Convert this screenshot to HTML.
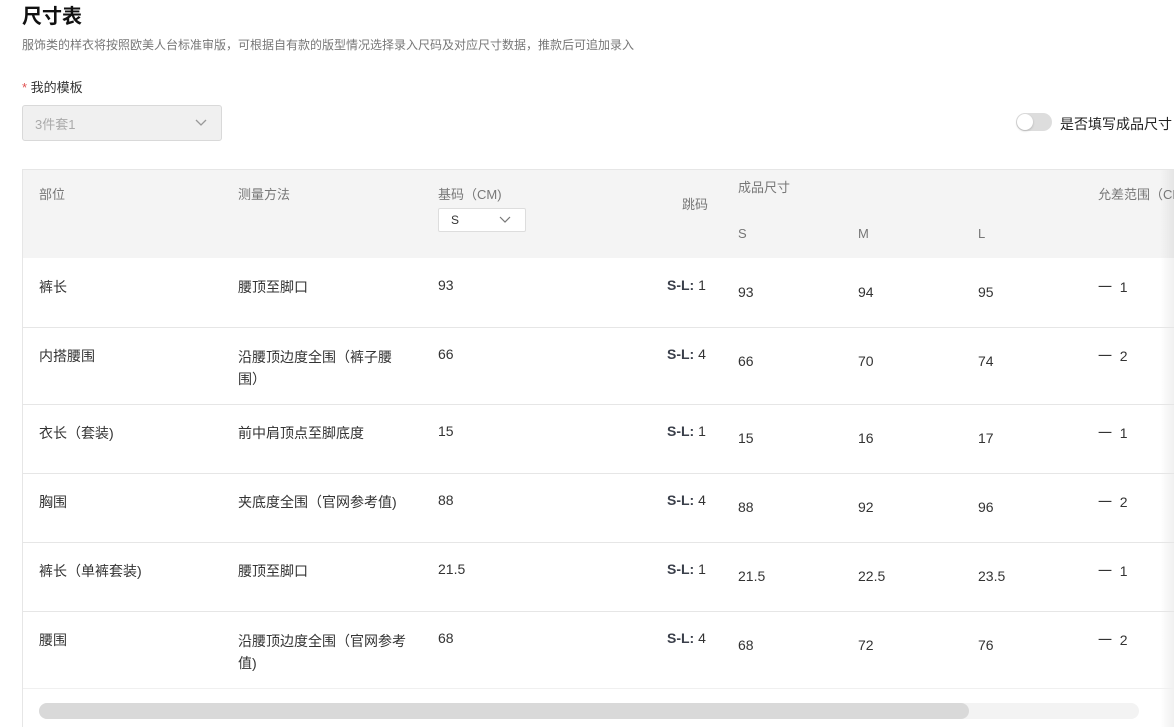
<!DOCTYPE html>
<html><head><meta charset="utf-8"><style>
*{margin:0;padding:0;box-sizing:border-box}
body{width:1174px;height:727px;overflow:hidden;background:#fff;font-family:"Liberation Sans","Noto Sans CJK SC",sans-serif;color:#333;position:relative}
.a{position:absolute;white-space:nowrap}
.h{font-size:13px;color:#777}
.c{font-size:14px;color:#333}
.b{font-weight:bold;color:#3a3f4a}
.line{position:absolute;left:23px;width:1151px;height:1px;background:#e6e6e6}
</style></head><body>
<div class="a" style="left:22px;top:0;font-size:20px;font-weight:bold;color:#111">尺寸表</div>
<div class="a" style="left:22px;top:36px;font-size:12px;color:#777">服饰类的样衣将按照欧美人台标准审版，可根据自有款的版型情况选择录入尺码及对应尺寸数据，推款后可追加录入</div>
<div class="a" style="left:22px;top:77px;font-size:13px;color:#333"><span style="color:#e05050">*</span> 我的模板</div>
<div class="a" style="left:22px;top:105px;width:200px;height:36px;background:#f0f0f0;border:1px solid #d9d9d9;border-radius:3px"></div>
<div class="a" style="left:35px;top:114px;font-size:13px;color:#aaa">3件套1</div>
<svg class="a" style="left:194px;top:118px" width="14" height="10"><path d="M2 2l5 5 5-5" fill="none" stroke="#999" stroke-width="1.3"/></svg>
<div class="a" style="left:1016px;top:113px;width:36px;height:18px;border-radius:9px;background:#ddd"></div>
<div class="a" style="left:1017px;top:114px;width:16px;height:16px;border-radius:8px;background:#fff;box-shadow:0 1px 2px rgba(0,0,0,.2)"></div>
<div class="a" style="left:1060px;top:114px;font-size:14px;color:#222">是否填写成品尺寸</div>
<div class="a" style="left:22px;top:169px;width:1152px;height:558px;border-left:1px solid #e6e6e6;border-top:1px solid #e6e6e6"></div>
<div class="a" style="left:23px;top:170px;width:1151px;height:88px;background:#f4f4f4"></div>
<div class="a" style="left:23px;top:688px;width:1151px;height:39px;background:#fff"></div>
<div class="a" style="left:1160px;top:170px;width:14px;height:557px;background:linear-gradient(90deg,rgba(0,0,0,0),rgba(0,0,0,.06))"></div>
<div class="a h" style="left:39px;top:184px">部位</div>
<div class="a h" style="left:238px;top:184px">测量方法</div>
<div class="a h" style="left:438px;top:184px">基码（CM)</div>
<div class="a" style="left:438px;top:208px;width:88px;height:24px;background:#fff;border:1px solid #ddd;border-radius:2px"></div>
<div class="a" style="left:451px;top:213px;font-size:12px;color:#333">S</div>
<svg class="a" style="left:498px;top:215px" width="14" height="10"><path d="M2 2l5 5 5-5" fill="none" stroke="#777" stroke-width="1.2"/></svg>
<div class="a h" style="left:682px;top:194px">跳码</div>
<div class="a h" style="left:738px;top:177px">成品尺寸</div>
<div class="a h" style="left:738px;top:226px">S</div>
<div class="a h" style="left:858px;top:226px">M</div>
<div class="a h" style="left:978px;top:226px">L</div>
<div class="a h" style="left:1098px;top:184px">允差范围（CM</div>
<div class="line" style="top:327px"></div>
<div class="line" style="top:404px"></div>
<div class="line" style="top:473px"></div>
<div class="line" style="top:542px"></div>
<div class="line" style="top:611px"></div>
<div class="line" style="top:688px;background:#f0f0f0"></div>

<div class="a c" style="left:39px;top:277px">裤长</div><div class="a c" style="left:238px;top:277px">腰顶至脚口</div><div class="a c" style="left:438px;top:277px">93</div><div class="a c" style="left:667px;top:277px"><span class="b">S-L:</span> 1</div><div class="a c" style="left:738px;top:284px">93</div><div class="a c" style="left:858px;top:284px">94</div><div class="a c" style="left:978px;top:284px">95</div><div class="a c" style="left:1098px;top:277px">一&nbsp;&nbsp;1</div>

<div class="a c" style="left:39px;top:346px">内搭腰围</div><div class="a c" style="left:238px;top:346px;line-height:22px">沿腰顶边度全围（裤子腰<br>围）</div><div class="a c" style="left:438px;top:346px">66</div><div class="a c" style="left:667px;top:346px"><span class="b">S-L:</span> 4</div><div class="a c" style="left:738px;top:353px">66</div><div class="a c" style="left:858px;top:353px">70</div><div class="a c" style="left:978px;top:353px">74</div><div class="a c" style="left:1098px;top:346px">一&nbsp;&nbsp;2</div>

<div class="a c" style="left:39px;top:423px">衣长（套装)</div><div class="a c" style="left:238px;top:423px">前中肩顶点至脚底度</div><div class="a c" style="left:438px;top:423px">15</div><div class="a c" style="left:667px;top:423px"><span class="b">S-L:</span> 1</div><div class="a c" style="left:738px;top:430px">15</div><div class="a c" style="left:858px;top:430px">16</div><div class="a c" style="left:978px;top:430px">17</div><div class="a c" style="left:1098px;top:423px">一&nbsp;&nbsp;1</div>

<div class="a c" style="left:39px;top:492px">胸围</div><div class="a c" style="left:238px;top:492px">夹底度全围（官网参考值)</div><div class="a c" style="left:438px;top:492px">88</div><div class="a c" style="left:667px;top:492px"><span class="b">S-L:</span> 4</div><div class="a c" style="left:738px;top:499px">88</div><div class="a c" style="left:858px;top:499px">92</div><div class="a c" style="left:978px;top:499px">96</div><div class="a c" style="left:1098px;top:492px">一&nbsp;&nbsp;2</div>

<div class="a c" style="left:39px;top:561px">裤长（单裤套装)</div><div class="a c" style="left:238px;top:561px">腰顶至脚口</div><div class="a c" style="left:438px;top:561px">21.5</div><div class="a c" style="left:667px;top:561px"><span class="b">S-L:</span> 1</div><div class="a c" style="left:738px;top:568px">21.5</div><div class="a c" style="left:858px;top:568px">22.5</div><div class="a c" style="left:978px;top:568px">23.5</div><div class="a c" style="left:1098px;top:561px">一&nbsp;&nbsp;1</div>

<div class="a c" style="left:39px;top:630px">腰围</div><div class="a c" style="left:238px;top:630px;line-height:22px">沿腰顶边度全围（官网参考<br>值)</div><div class="a c" style="left:438px;top:630px">68</div><div class="a c" style="left:667px;top:630px"><span class="b">S-L:</span> 4</div><div class="a c" style="left:738px;top:637px">68</div><div class="a c" style="left:858px;top:637px">72</div><div class="a c" style="left:978px;top:637px">76</div><div class="a c" style="left:1098px;top:630px">一&nbsp;&nbsp;2</div>

<div class="a" style="left:39px;top:703px;width:1100px;height:16px;border-radius:8px;background:#f3f3f3"></div>
<div class="a" style="left:39px;top:703px;width:930px;height:16px;border-radius:8px;background:#d9d9d9"></div>
</body></html>
